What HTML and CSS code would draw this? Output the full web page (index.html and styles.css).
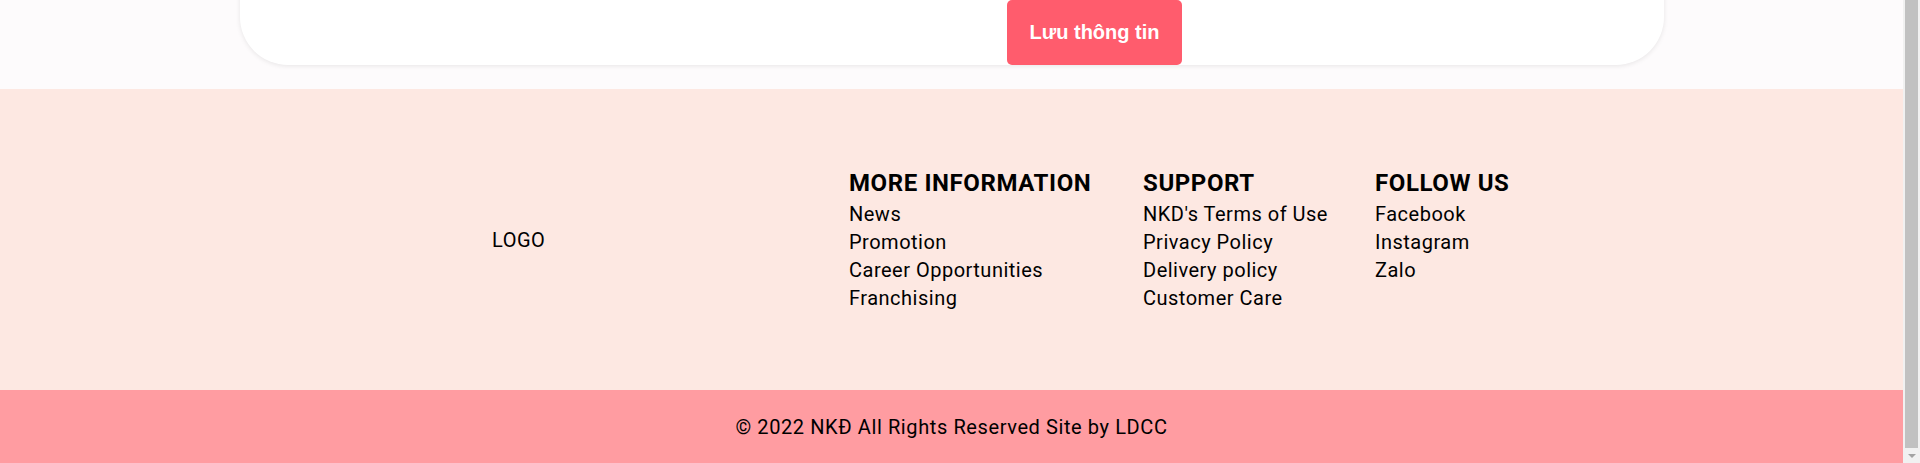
FILE: index.html
```html
<!DOCTYPE html>
<html lang="vi">
<head>
<meta charset="utf-8">
<title>NKĐ</title>
<link rel="stylesheet" href="styles.css">
</head>
<body>
<div class="page">
  <div class="page-inner">
    <section class="form-section">
      <div class="card">
        <div class="card-body"></div>
        <div class="card-actions">
          <button class="btn-save" type="button">Lưu thông tin</button>
        </div>
      </div>
    </section>
    <footer class="footer">
      <div class="footer-main">
        <div class="footer-logo">LOGO</div>
        <div class="footer-col">
          <h3 class="footer-title">MORE INFORMATION</h3>
          <a class="footer-link" href="#">News</a>
          <a class="footer-link" href="#">Promotion</a>
          <a class="footer-link" href="#">Career Opportunities</a>
          <a class="footer-link" href="#">Franchising</a>
        </div>
        <div class="footer-col">
          <h3 class="footer-title">SUPPORT</h3>
          <a class="footer-link" href="#">NKD's Terms of Use</a>
          <a class="footer-link" href="#">Privacy Policy</a>
          <a class="footer-link" href="#">Delivery policy</a>
          <a class="footer-link" href="#">Customer Care</a>
        </div>
        <div class="footer-col">
          <h3 class="footer-title">FOLLOW US</h3>
          <a class="footer-link" href="#">Facebook</a>
          <a class="footer-link" href="#">Instagram</a>
          <a class="footer-link" href="#">Zalo</a>
        </div>
      </div>
      <div class="footer-bottom">© 2022 NKĐ All Rights Reserved Site by LDCC</div>
    </footer>
  </div>
</div>
<div class="scrollbar">
  <div class="scroll-track"><div class="scroll-thumb"></div></div>
  <div class="scroll-arrow"></div>
</div>
</body>
</html>
```
FILE: styles.css
```css
* { box-sizing: border-box; }
html, body { margin: 0; padding: 0; height: 100%; }
body {
  display: flex;
  overflow: hidden;
  font-family: Roboto, "Liberation Sans", Arial, sans-serif;
  color: #000;
  background: #fdfbfc;
}
.page {
  flex: 1;
  min-width: 0;
  overflow: hidden;
}
.page-inner {
  margin-top: -60px;
}
.form-section {
  background: #fdfbfc;
  padding: 0 0 24.5px;
}
.card {
  width: 1424px;
  margin: 0 auto;
  background: #fff;
  border-radius: 48px;
  box-shadow: 0 1px 5px rgba(0, 0, 0, 0.09);
}
.card-body { height: 60px; }
.card-actions {
  display: flex;
  padding-left: 767.5px;
}
.btn-save {
  width: 175px;
  height: 64.5px;
  border: none;
  border-radius: 5px;
  background: #ff5c6d;
  color: #fff;
  font-family: "Liberation Sans", Arial, sans-serif;
  font-weight: 700;
  font-size: 20px;
  cursor: pointer;
}
.footer { background: #fde8e2; }
.footer-main {
  display: grid;
  grid-template-columns: 357px 294px 232px auto;
  align-items: center;
  width: 1424px;
  margin: 0 auto;
  padding: 79px 0 78px 252.5px;
  letter-spacing: 0.5px;
}
.footer-logo {
  font-size: 20px;
  line-height: 28px;
}
.footer-col {
  display: flex;
  flex-direction: column;
  align-self: start;
}
.footer-title {
  margin: 0 0 2px;
  font-size: 24px;
  line-height: 30px;
  font-weight: 700;
  letter-spacing: 0.6px;
}
.footer-link {
  font-size: 20px;
  line-height: 28px;
  color: #000;
  text-decoration: none;
}
.footer-bottom {
  background: #ff9ca1;
  padding: 23px 0;
  text-align: center;
  font-size: 20px;
  line-height: 28px;
  letter-spacing: 0.6px;
}
.scrollbar {
  width: 17px;
  height: 100vh;
  flex: none;
  background: #f1f1f1;
  display: flex;
  flex-direction: column;
}
.scroll-track {
  flex: 1;
  padding: 0 2px;
}
.scroll-thumb {
  height: 448px;
  background: #c1c1c1;
}
.scroll-arrow {
  height: 15px;
  display: flex;
  justify-content: center;
  align-items: center;
}
.scroll-arrow::after {
  content: "";
  width: 0;
  height: 0;
  border-left: 4px solid transparent;
  border-right: 4px solid transparent;
  border-top: 4px solid #a3a3a3;
}
```
